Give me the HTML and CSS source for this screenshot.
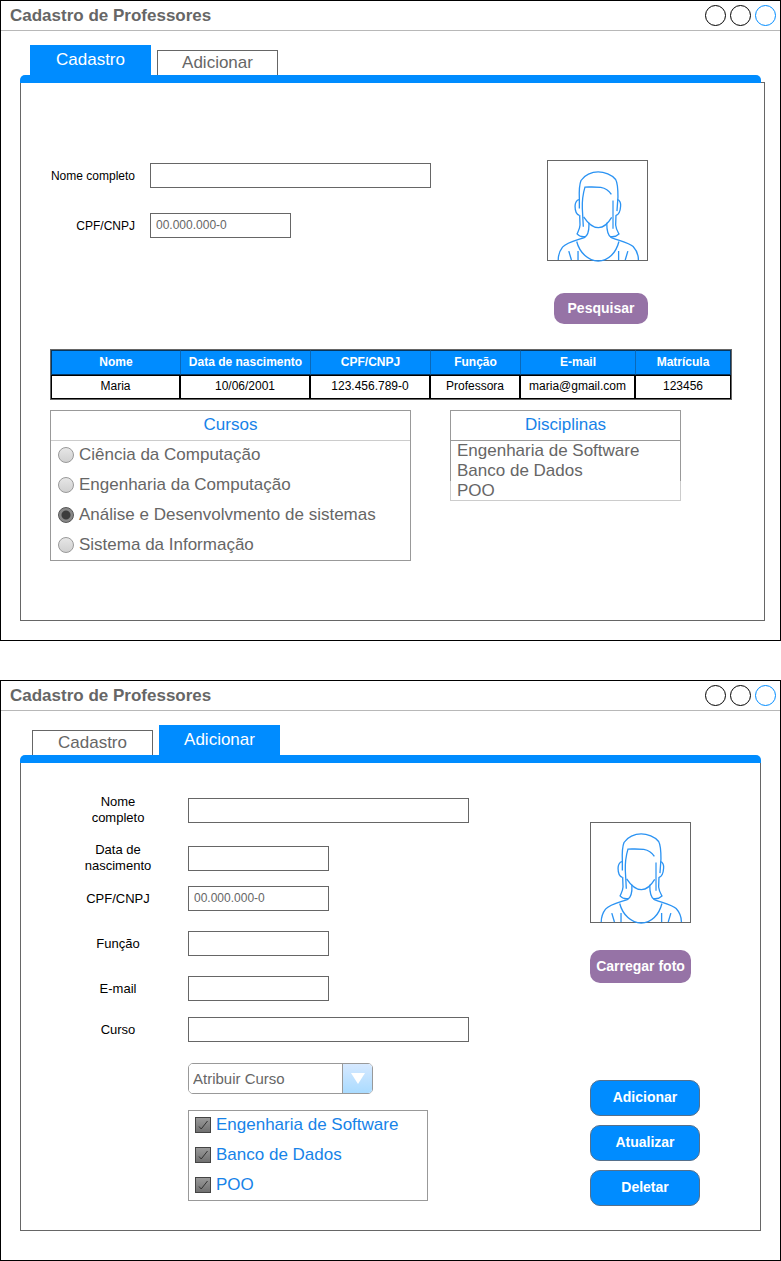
FILE: index.html
```html
<!DOCTYPE html>
<html lang="pt-BR">
<head>
<meta charset="utf-8">
<meta name="viewport" content="width=device-width, initial-scale=1">
<title>Cadastro de Professores</title>
<link rel="stylesheet" href="styles.css">
</head>
<body>
<svg class="defs" aria-hidden="true">
  <symbol id="avatar" viewBox="22 16 300 300" overflow="visible">
    <g fill="none" stroke="#2b93f3" stroke-width="4">
      <path d="M117 160V130C116 105 116 90 122 75C132 58 155 49 174 49C192 49 216 58 227 72C234 84 234 105 234 125L231 168"/>
      <path d="M116 133C108 134 104 145 104 153C104 166 109 178 117 181"/>
      <path d="M232 133C240 134 243 145 242 153C241 168 237 178 228 181"/>
      <path d="M118 180L119 210C119 220 114 228 110 237C116 244 125 247 136 245"/>
      <path d="M228 180L227 210C228 222 233 230 237 237C230 244 222 247 210 245"/>
      <path d="M129 215L126 160C125 130 128 115 134 95C150 95 165 94 182 96C198 99 208 108 214 117"/>
      <path d="M130 185C140 200 158 218 175 218C190 218 206 202 215 187"/>
      <path d="M219 136V221" stroke="#7cbcf7" stroke-width="6"/>
      <path d="M146 203C147 225 143 243 132 248C110 256 80 262 66 277C56 290 53 303 53 316"/>
      <path d="M200 203C200 225 203 243 214 248C236 257 268 264 280 275C292 288 296 302 296 316"/>
      <path d="M109 260C118 295 145 319 174 319C205 319 228 295 237 260"/>
      <path d="M85 289L93 316M113 289V316M236 289V316M264 289L256 316"/>
    </g>
  </symbol>
  <symbol id="tick" viewBox="0 0 16 16">
    <path d="M4 9.5L6.2 12L12.5 4" fill="none" stroke="#333" stroke-width="1"/>
  </symbol>
</svg>

<section class="window">
  <header class="titlebar">
    <h1 class="title">Cadastro de Professores</h1>
    <div class="controls">
      <button class="control" type="button" aria-label="Minimizar"></button>
      <button class="control" type="button" aria-label="Maximizar"></button>
      <button class="control control-close" type="button" aria-label="Fechar"></button>
    </div>
  </header>
  <div class="content content-search">
    <div class="tabs" role="tablist">
      <button class="tab tab-active" type="button" role="tab" aria-selected="true">Cadastro</button>
      <button class="tab" type="button" role="tab" aria-selected="false">Adicionar</button>
    </div>
    <div class="bar"></div>
    <div class="panel panel-search">
      <div class="search">
        <form class="search-form">
          <div class="search-row">
            <label class="search-label" for="busca-nome">Nome completo</label>
            <input class="input input-wide" id="busca-nome" type="text">
          </div>
          <div class="search-row">
            <label class="search-label" for="busca-cpf">CPF/CNPJ</label>
            <input class="input" id="busca-cpf" type="text" placeholder="00.000.000-0">
          </div>
        </form>
        <div class="search-side">
          <svg class="avatar" role="img" aria-label="Foto"><use href="#avatar"/></svg>
          <button class="btn btn-search" type="button">Pesquisar</button>
        </div>
      </div>
      <table class="results">
        <colgroup><col class="c-name"><col class="c-birth"><col class="c-cpf"><col class="c-role"><col class="c-mail"><col class="c-id"></colgroup>
        <thead>
          <tr><th>Nome</th><th>Data de nascimento</th><th>CPF/CNPJ</th><th>Função</th><th>E-mail</th><th>Matrícula</th></tr>
        </thead>
        <tbody>
          <tr><td>Maria</td><td>10/06/2001</td><td>123.456.789-0</td><td>Professora</td><td>maria@gmail.com</td><td>123456</td></tr>
        </tbody>
      </table>
      <div class="lists">
        <fieldset class="courses" aria-labelledby="cursos">
          <h2 class="list-title" id="cursos">Cursos</h2>
          <div class="radio-list">
            <label class="option"><input class="radio" type="radio" name="curso">Ciência da Computação</label>
            <label class="option"><input class="radio" type="radio" name="curso">Engenharia da Computação</label>
            <label class="option"><input class="radio" type="radio" name="curso" checked>Análise e Desenvolvmento de sistemas</label>
            <label class="option"><input class="radio" type="radio" name="curso">Sistema da Informação</label>
          </div>
        </fieldset>
        <section class="subjects">
          <h2 class="list-title list-title-boxed">Disciplinas</h2>
          <ul class="subject-list">
            <li>Engenharia de Software</li>
            <li>Banco de Dados</li>
            <li>POO</li>
          </ul>
        </section>
      </div>
    </div>
  </div>
</section>

<section class="window">
  <header class="titlebar">
    <h1 class="title">Cadastro de Professores</h1>
    <div class="controls">
      <button class="control" type="button" aria-label="Minimizar"></button>
      <button class="control" type="button" aria-label="Maximizar"></button>
      <button class="control control-close" type="button" aria-label="Fechar"></button>
    </div>
  </header>
  <div class="content content-add">
    <div class="tabs" role="tablist">
      <button class="tab" type="button" role="tab" aria-selected="false">Cadastro</button>
      <button class="tab tab-active" type="button" role="tab" aria-selected="true">Adicionar</button>
    </div>
    <div class="bar"></div>
    <form class="panel panel-add">
      <div class="fields">
        <div class="field">
          <label class="field-label" for="nome">Nome completo</label>
          <input class="input input-wide" id="nome" type="text">
        </div>
        <div class="field field-near">
          <label class="field-label" for="nascimento">Data de nascimento</label>
          <input class="input" id="nascimento" type="text">
        </div>
        <div class="field">
          <label class="field-label" for="cpf">CPF/CNPJ</label>
          <input class="input" id="cpf" type="text" placeholder="00.000.000-0">
        </div>
        <div class="field field-far">
          <label class="field-label" for="funcao">Função</label>
          <input class="input" id="funcao" type="text">
        </div>
        <div class="field field-far">
          <label class="field-label" for="email">E-mail</label>
          <input class="input" id="email" type="text">
        </div>
        <div class="field field-near">
          <label class="field-label" for="curso">Curso</label>
          <input class="input input-wide" id="curso" type="text">
        </div>
        <div class="assign">
          <div class="picker">
            <select class="select" aria-label="Atribuir Curso"><option>Atribuir Curso</option></select>
            <span class="arrow"><svg width="14" height="11" viewBox="0 0 14 11" aria-hidden="true"><path d="M0 0H14L7 11Z" fill="#fff"/></svg></span>
          </div>
          <div class="checks">
            <label class="option option-check"><span class="check"><input class="checkbox" type="checkbox" checked><svg class="tick" aria-hidden="true"><use href="#tick"/></svg></span>Engenharia de Software</label>
            <label class="option option-check"><span class="check"><input class="checkbox" type="checkbox" checked><svg class="tick" aria-hidden="true"><use href="#tick"/></svg></span>Banco de Dados</label>
            <label class="option option-check"><span class="check"><input class="checkbox" type="checkbox" checked><svg class="tick" aria-hidden="true"><use href="#tick"/></svg></span>POO</label>
          </div>
        </div>
      </div>
      <div class="add-side">
        <svg class="avatar" role="img" aria-label="Foto"><use href="#avatar"/></svg>
        <button class="btn btn-upload" type="button">Carregar foto</button>
        <div class="actions">
          <button class="btn btn-action" type="button">Adicionar</button>
          <button class="btn btn-action" type="button">Atualizar</button>
          <button class="btn btn-action" type="button">Deletar</button>
        </div>
      </div>
    </form>
  </div>
</section>
</body>
</html>
```
FILE: styles.css
```css
* {
  box-sizing: border-box;
}

body {
  margin: 0;
  display: flex;
  flex-direction: column;
  gap: 39px;
  background: #fff;
  color: #000;
  font-family: "Liberation Sans", Arial, sans-serif;
  font-size: 12px;
}

button,
input,
select {
  margin: 0;
  font-family: inherit;
}

.defs {
  position: absolute;
  width: 0;
  height: 0;
}

/* Window frame */
.window {
  border: 1px solid #000;
}

.titlebar {
  display: flex;
  align-items: center;
  justify-content: space-between;
  height: 30px;
  padding: 0 4px 0 9px;
  border-bottom: 1px solid #b8b8b8;
}

.title {
  margin: 0;
  color: #666;
  font-size: 17px;
  line-height: 20px;
}

.controls {
  display: flex;
  gap: 4px;
}

.control {
  width: 21px;
  height: 21px;
  padding: 0;
  border: 1px solid #000;
  border-radius: 50%;
  background: #fff;
}

.control-close {
  border-color: #008cff;
}

/* Tabs */
.content {
  padding: 14px 15px 19px 19px;
}

.content-add {
  padding-right: 19px;
  padding-bottom: 29px;
}

.tabs {
  display: flex;
  align-items: flex-end;
  gap: 6px;
  height: 30px;
  padding-left: 10px;
}

.content-add .tabs {
  padding-left: 12px;
}

.tab {
  width: 121px;
  height: 25px;
  padding: 0;
  border: 1px solid #666;
  border-bottom: 0;
  background: #fff;
  color: #666;
  font-size: 17px;
}

.tab-active {
  height: 30px;
  border: 0;
  background: #008cff;
  color: #fff;
}

.bar {
  position: relative;
  height: 8px;
  border-radius: 5px 5px 0 0;
  background: #008cff;
}

.content-search .bar {
  margin-right: 4px;
}

.panel {
  margin-top: -1px;
  border: 1px solid #666;
}

/* Search panel */
.panel-search {
  padding: 77px 32px 59px 29px;
}

.search {
  display: flex;
  justify-content: space-between;
  padding-right: 84px;
}

.search-form {
  display: flex;
  flex-direction: column;
  gap: 25px;
  padding-top: 3px;
}

.search-row {
  display: flex;
  align-items: center;
}

.search-label {
  width: 100px;
  padding-right: 15px;
  text-align: right;
}

.input {
  width: 141px;
  height: 25px;
  padding: 0 5px 2px;
  border: 1px solid #666;
  border-radius: 0;
  background: #fff;
  color: #666;
  font-size: 12px;
}

.input::placeholder {
  color: #666;
  opacity: 1;
}

.input-wide {
  width: 281px;
}

.avatar {
  display: block;
  width: 101px;
  height: 101px;
  border: 1px solid #666;
  overflow: visible;
}

.search-side {
  display: flex;
  flex-direction: column;
  align-items: flex-end;
  gap: 32px;
}

.btn {
  padding: 0 0 2px;
  border: 0;
  border-radius: 10px;
  background: #9673a6;
  color: #fff;
  font-size: 14px;
  font-weight: bold;
}

.btn-search {
  width: 94px;
  height: 31px;
}

/* Results */
.results {
  width: 100%;
  margin-top: 25px;
  border: 1px solid #666;
  border-collapse: separate;
  border-spacing: 0;
  table-layout: fixed;
  text-align: center;
}

.c-name {
  width: 129px;
}

.c-birth {
  width: 130px;
}

.c-cpf {
  width: 120px;
}

.c-role {
  width: 90px;
}

.c-mail {
  width: 115px;
}

.c-id {
  width: 96px;
}

.results th {
  height: 25px;
  padding: 0 0 2px;
  border: solid #06365f;
  border-width: 1px 0 1px 1px;
  border-left-color: #0a68b8;
  background: #008cff;
  color: #fff;
}

.results th:first-child {
  border-left-color: #06365f;
}

.results th:last-child {
  border-right: 1px solid #06365f;
}

.results td {
  height: 24px;
  padding: 0 0 2px;
  border: 1px solid #000;
}

/* Course and subject lists */
.lists {
  display: flex;
  align-items: flex-start;
  gap: 39px;
  margin-top: 10px;
}

.courses {
  width: 361px;
  margin: 0;
  padding: 0;
  border: 1px solid #999;
}

.list-title {
  margin: 0;
  height: 30px;
  border-bottom: 1px solid #ccc;
  color: #1783e8;
  font-size: 17px;
  font-weight: normal;
  line-height: 28px;
  text-align: center;
}

.list-title-boxed {
  height: 31px;
  border: 1px solid #999;
}

.radio-list {
  display: flex;
  flex-direction: column;
  gap: 2px;
  padding-bottom: 1px;
}

.option {
  display: flex;
  align-items: center;
  gap: 5px;
  height: 28px;
  padding-left: 7px;
  color: #666;
  font-size: 17px;
  line-height: 20px;
}

.radio {
  appearance: none;
  width: 16px;
  height: 16px;
  border: 1px solid #999;
  border-radius: 50%;
  background: linear-gradient(#e6e6e6, #d0d0d0);
}

.radio:checked {
  border-color: #555;
  background: radial-gradient(circle, #3c3c3c 4px, #888 5px);
}

.subjects {
  width: 231px;
}

.subject-list {
  margin: 0;
  padding: 0;
  list-style: none;
}

.subject-list li {
  height: 20px;
  padding-left: 6px;
  border: solid #999;
  border-width: 0 1px;
  color: #666;
  font-size: 17px;
  line-height: 20px;
}

.subject-list li:last-child {
  border-color: #ccc;
  border-bottom-width: 1px;
}

/* Add panel */
.panel-add {
  display: flex;
  justify-content: space-between;
  padding: 31px 60px 24px 57px;
}

.fields {
  display: flex;
  flex-direction: column;
  gap: 12px;
}

.field {
  display: flex;
  align-items: center;
  gap: 30px;
}

.field-near {
  margin-top: 4px;
}

.field-far {
  margin-top: 8px;
}

.field-label {
  width: 80px;
  font-size: 13px;
  line-height: 16px;
  text-align: center;
}

.assign {
  display: flex;
  flex-direction: column;
  align-items: flex-start;
  gap: 16px;
  margin-top: 9px;
  padding-left: 110px;
}

.picker {
  display: grid;
  width: 185px;
  height: 31px;
  border: 1px solid #999;
  border-radius: 5px;
  overflow: hidden;
}

.select {
  grid-area: 1 / 1;
  appearance: none;
  padding: 0 34px 0 4px;
  border: 0;
  background: #fff;
  color: #666;
  font-size: 15px;
}

.arrow {
  grid-area: 1 / 1;
  justify-self: end;
  display: flex;
  align-items: center;
  justify-content: center;
  width: 30px;
  border-left: 1px solid #999;
  background: linear-gradient(#d6e9ff, #aadbff);
  pointer-events: none;
}

.checks {
  display: flex;
  flex-direction: column;
  gap: 2px;
  width: 240px;
  height: 91px;
  border: 1px solid #999;
}

.option-check {
  padding-left: 6px;
  color: #1783e8;
}

.check {
  display: grid;
}

.checkbox {
  grid-area: 1 / 1;
  appearance: none;
  width: 16px;
  height: 16px;
  border: 1px solid #444;
  background: linear-gradient(#999, #707070);
}

.tick {
  grid-area: 1 / 1;
  width: 16px;
  height: 16px;
  pointer-events: none;
}

.add-side {
  display: flex;
  flex-direction: column;
  padding-top: 28px;
}

.btn-upload {
  width: 101px;
  height: 33px;
  margin-top: 27px;
}

.actions {
  display: flex;
  flex-direction: column;
  gap: 9px;
  margin-top: 97px;
}

.btn-action {
  width: 110px;
  height: 36px;
  border: 1px solid #55708c;
  background: #008cff;
}
```
